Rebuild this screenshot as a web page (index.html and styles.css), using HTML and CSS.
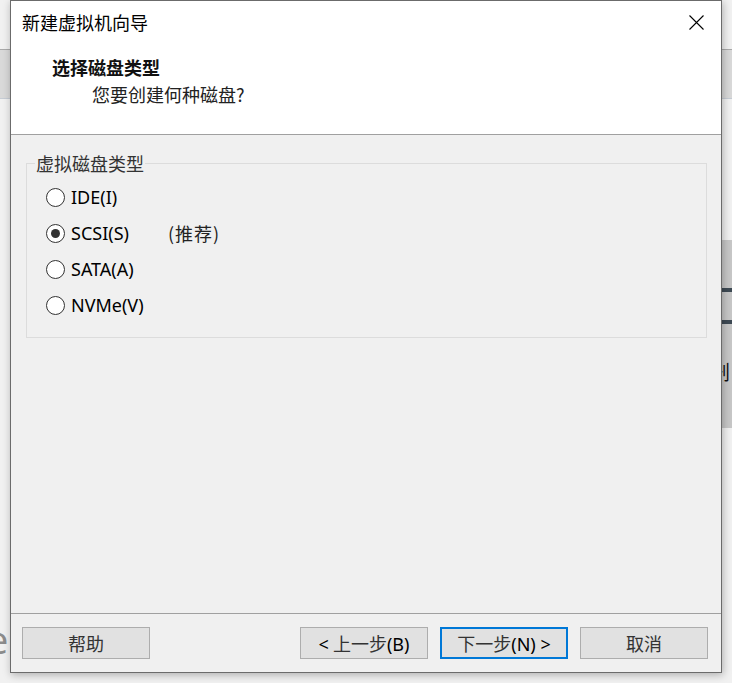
FILE: index.html
```html
<!DOCTYPE html>
<html lang="zh-CN">
<head>
<meta charset="utf-8">
<title>新建虚拟机向导</title>
<link rel="stylesheet" href="styles.css">
</head>
<body>
<div class="desk">
  <div class="bg-band bg-band-left"></div>
  <div class="bg-band bg-band-right"></div>
  <div class="bg-block">
    <div class="bg-line bg-line-1"></div>
    <div class="bg-line bg-line-2"></div>
    <span class="bg-char">剧</span>
  </div>
  <span class="bg-e">e</span>

  <div class="dialog">
    <div class="header">
      <div class="titlebar">
        <span class="title">新建虚拟机向导</span>
        <svg class="close" width="15" height="15" viewBox="0 0 15 15"><path d="M0.5 0.5L14.5 14.5M14.5 0.5L0.5 14.5" stroke="#000" stroke-width="1.1" fill="none"/></svg>
      </div>
      <div class="heading">选择磁盘类型</div>
      <div class="subheading">您要创建何种磁盘?</div>
    </div>
    <div class="body">
      <fieldset class="group">
        <legend class="legend">虚拟磁盘类型</legend>
        <div class="opts">
          <div class="opt"><span class="radio"></span><span class="opt-name">IDE(I)</span></div>
          <div class="opt"><span class="radio checked"></span><span class="opt-name">SCSI(S)</span><span class="opt-note">(推荐)</span></div>
          <div class="opt"><span class="radio"></span><span class="opt-name">SATA(A)</span></div>
          <div class="opt"><span class="radio"></span><span class="opt-name">NVMe(V)</span></div>
        </div>
      </fieldset>
    </div>
    <div class="footer">
      <button class="btn"><span class="btn-label">帮助</span></button>
      <div class="spacer"></div>
      <button class="btn"><span class="btn-label"><span class="lat">&lt;</span> 上一步<span class="lat">(B)</span></span></button>
      <button class="btn btn-default"><span class="btn-label">下一步<span class="lat">(N) &gt;</span></span></button>
      <button class="btn"><span class="btn-label">取消</span></button>
    </div>
  </div>
</div>
</body>
</html>
```
FILE: styles.css
```css
html, body {
  margin: 0;
  padding: 0;
}
body {
  width: 732px;
  height: 683px;
  overflow: hidden;
  background: #f1f1f1;
  font-family: "Noto Sans CJK SC", "Noto Sans", sans-serif;
  color: #000;
}
.desk {
  position: relative;
  width: 732px;
  height: 683px;
  overflow: hidden;
}
.bg-band {
  position: absolute;
  top: 49px;
  height: 48px;
  background: #d9d9d9;
  border-top: 1px solid #a9a9a9;
  border-bottom: 1px solid #c6ccd4;
}
.bg-band-left { left: 0; width: 12px; }
.bg-band-right { left: 718px; width: 14px; }
.bg-block {
  position: absolute;
  left: 718px;
  top: 240px;
  width: 14px;
  height: 188px;
  background: #c7c7c7;
}
.bg-line {
  position: absolute;
  left: 0;
  width: 14px;
  height: 4px;
  background: #3e4a54;
}
.bg-line-1 { top: 48px; }
.bg-line-2 { top: 80px; }
.bg-char {
  position: absolute;
  left: -8px;
  top: 120px;
  font-size: 20px;
  line-height: 24px;
  color: #111;
}
.bg-e {
  position: absolute;
  left: -13px;
  top: 614px;
  font-family: "Open Sans", sans-serif;
  font-size: 38px;
  line-height: 50px;
  color: #8c8c8c;
}
.dialog {
  position: absolute;
  left: 10px;
  top: 0;
  width: 712px;
  height: 673px;
  box-sizing: border-box;
  border: 1px solid #6b6b6b;
  background: #f0f0f0;
  display: flex;
  flex-direction: column;
  box-shadow: 1px 2px 8px rgba(0, 0, 0, 0.28);
}
.header {
  height: 133px;
  background: #fff;
  border-bottom: 1px solid #a0a0a0;
  flex: none;
}
.titlebar {
  height: 42px;
  display: flex;
  align-items: center;
  justify-content: space-between;
  padding: 0 17px 0 11px;
}
.title {
  font-size: 18px;
  line-height: 24px;
  color: #000;
}
.close {
  display: block;
  margin-top: 1px;
}
.heading {
  margin-top: 11px;
  padding-left: 41px;
  font-size: 18px;
  line-height: 26px;
  font-weight: 700;
  color: #111;
}
.subheading {
  margin-top: 1px;
  padding-left: 81px;
  font-size: 18px;
  line-height: 26px;
  color: #222;
}
.body {
  flex: 1;
  padding: 16px 14px 0 15px;
}
.group {
  margin: 0;
  padding: 0 0 14px 8px;
  border: 1px solid #dcdcdc;
  min-width: 0;
}
.legend {
  padding: 0 1px;
  font-size: 18px;
  line-height: 24px;
  color: #333;
}
.opts {
  padding-top: 4px;
  margin-left: 11px;
  display: flex;
  flex-direction: column;
}
.opt {
  height: 36px;
  display: flex;
  align-items: center;
}
.radio {
  width: 19px;
  height: 19px;
  box-sizing: border-box;
  border: 1px solid #333;
  border-radius: 50%;
  background: #fff;
  display: flex;
  align-items: center;
  justify-content: center;
  flex: none;
}
.radio.checked::after {
  content: "";
  width: 9px;
  height: 9px;
  border-radius: 50%;
  background: #333;
}
.opt-name {
  margin-left: 6px;
  width: 97px;
  font-family: "Noto Sans", "Noto Sans CJK SC", sans-serif;
  font-size: 18px;
  line-height: 24px;
  color: #000;
}
.opt-note {
  font-size: 18px;
  line-height: 24px;
  color: #222;
  letter-spacing: 1px;
}
.footer {
  height: 45px;
  flex: none;
  border-top: 1px solid #a0a0a0;
  padding: 13px 13px 0 11px;
  display: flex;
  align-items: flex-start;
  gap: 12px;
}
.spacer { flex: 1; }
.btn {
  width: 128px;
  height: 32px;
  box-sizing: border-box;
  margin: 0;
  padding: 0;
  border: 1px solid #adadad;
  background: #e1e1e1;
  font-family: "Noto Sans CJK SC", "Noto Sans", sans-serif;
  font-size: 18px;
  line-height: 24px;
  color: #333;
  display: flex;
  align-items: center;
  justify-content: center;
}
.btn-default {
  border: 2px solid #0078d7;
}
.btn-label {
  white-space: pre;
}
.lat {
  font-family: "Noto Sans", sans-serif;
  font-size: 18px;
  color: #000;
}
```
